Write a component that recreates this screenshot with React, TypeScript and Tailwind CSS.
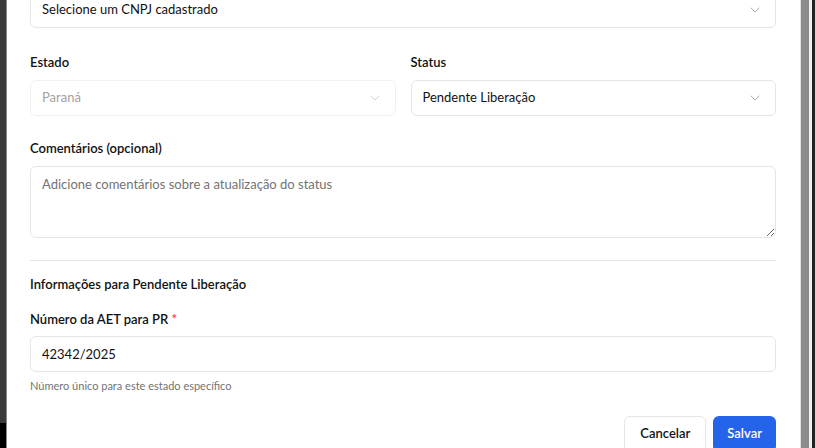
import React from "react";
import { ChevronDown } from "lucide-react";

function SelectBox({ value, disabled }: { value: string; disabled?: boolean }) {
  return (
    <div
      className={
        "flex h-9 w-full items-center justify-between rounded-md border border-[#e5e5e5] bg-white pl-[11px] pr-3 text-[13px] " +
        (disabled ? "opacity-50 text-[#444]" : "text-[#111]")
      }
    >
      <span>{value}</span>
      <ChevronDown className="h-4 w-4 text-[#777] opacity-60" strokeWidth={1.5} />
    </div>
  );
}

export default function App() {
  return (
    <div
      className="flex h-[448px] w-[815px] overflow-hidden bg-[#1b1b1b]"
      style={{ fontFamily: 'Lato, "Noto Sans", sans-serif' }}
    >
      <div className="flex w-[6px] flex-col">
        <div className="h-[423px] bg-[#3a3a3a]" />
        <div className="flex-1 bg-black" />
      </div>
      <div className="w-px bg-[#8a8a8a]" />
      <main className="flex flex-1 flex-col bg-white pl-[23px] pr-[24px] text-[#111]">
        <div className="-mt-2">
          <SelectBox value="Selecione um CNPJ cadastrado" />
        </div>
        <div className="mt-6 grid grid-cols-2 gap-[15px]">
          <div className="flex flex-col gap-2">
            <label className="text-[13px] font-semibold leading-5">Estado</label>
            <SelectBox value="Paraná" disabled />
          </div>
          <div className="flex flex-col gap-2">
            <label className="text-[13px] font-semibold leading-5">Status</label>
            <SelectBox value="Pendente Liberação" />
          </div>
        </div>
        <div className="mt-[22px] flex flex-col gap-2">
          <label className="text-[13px] font-semibold leading-5">Comentários (opcional)</label>
          <textarea
            className="h-[72px] w-full resize-y rounded-md border border-[#e5e5e5] py-2 pl-[11px] pr-3 text-[13px] text-[#111] outline-none placeholder:text-[#737373]"
            placeholder="Adicione comentários sobre a atualização do status"
          />
        </div>
        <div className="mt-[22px] border-t border-[#e5e5e5] pt-[13px]">
          <h3 className="text-[13px] font-semibold leading-5">Informações para Pendente Liberação</h3>
          <div className="mt-[15px] flex flex-col gap-[7px]">
            <label className="text-[13px] font-semibold leading-5">
              Número da AET para PR <span className="text-[#ef4444]">*</span>
            </label>
            <input
              readOnly
              value="42342/2025"
              className="h-9 w-full rounded-md border border-[#e5e5e5] pl-[11px] pr-3 text-[13px] text-[#111] outline-none"
            />
          </div>
          <p className="mt-1.5 text-[11px] leading-4 text-[#737373]">Número único para este estado específico</p>
        </div>
        <div className="mt-[22px] flex justify-end gap-[7px]">
          <button className="h-9 rounded-md border border-[#e5e5e5] bg-white px-[15px] text-[13px] font-semibold text-[#111]">
            Cancelar
          </button>
          <button className="h-9 rounded-md bg-[#2563eb] px-[14px] text-[13px] font-semibold text-white">Salvar</button>
        </div>
      </main>
      <div className="w-px bg-[#e0e0e0]" />
      <div className="w-[8px] bg-[#8c8c8c]" />
      <div className="w-[3px] bg-[#f0f0f0]" />
      <div className="w-[3px] bg-[#222]" />
    </div>
  );
}
